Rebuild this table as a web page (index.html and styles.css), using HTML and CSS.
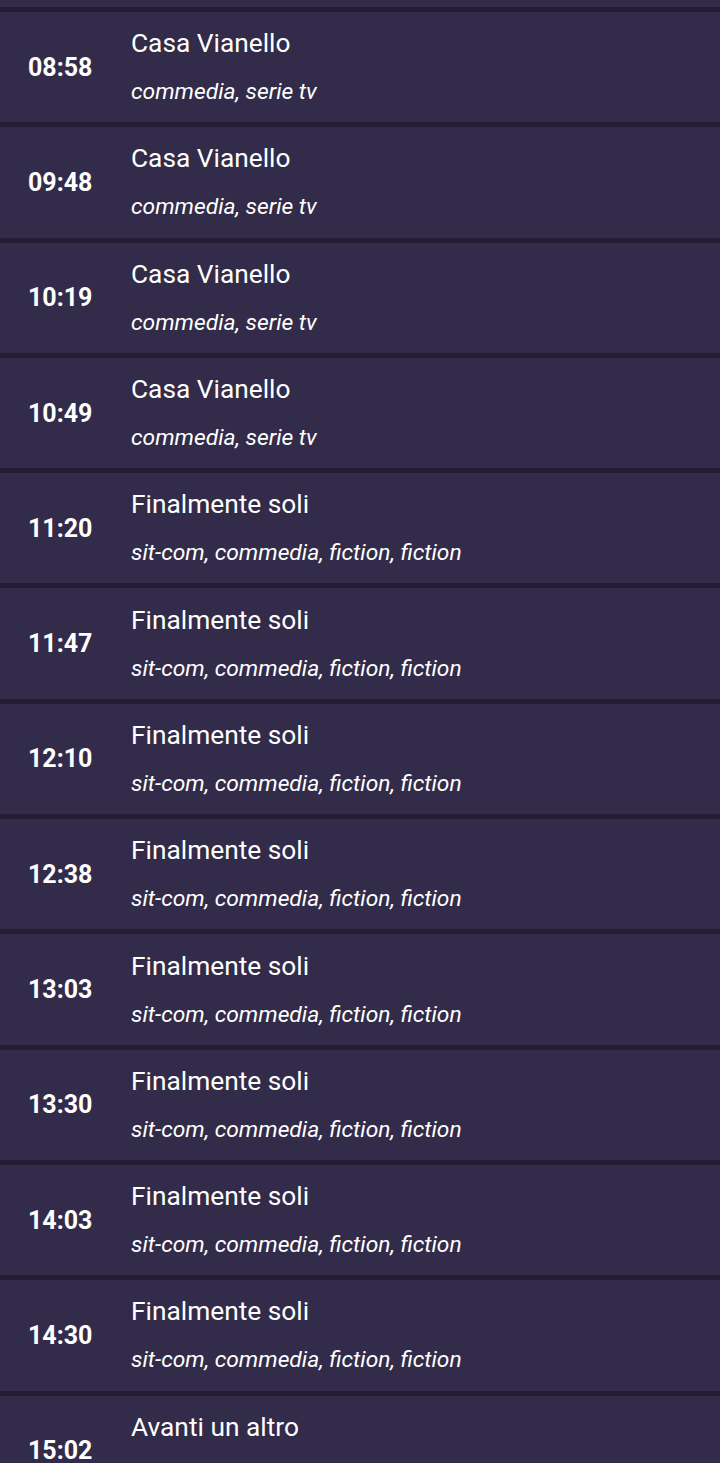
FILE: index.html
```html
<!DOCTYPE html>
<html lang="it">
<head>
<meta charset="utf-8">
<title>Guida TV</title>
<link rel="stylesheet" href="styles.css">
</head>
<body>
<ul class="schedule">
  <li class="item-partial"></li>
  <li class="item"><span class="time">08:58</span><div class="info"><div class="title">Casa Vianello</div><div class="genre">commedia, serie tv</div></div></li>
  <li class="item"><span class="time">09:48</span><div class="info"><div class="title">Casa Vianello</div><div class="genre">commedia, serie tv</div></div></li>
  <li class="item"><span class="time">10:19</span><div class="info"><div class="title">Casa Vianello</div><div class="genre">commedia, serie tv</div></div></li>
  <li class="item"><span class="time">10:49</span><div class="info"><div class="title">Casa Vianello</div><div class="genre">commedia, serie tv</div></div></li>
  <li class="item"><span class="time">11:20</span><div class="info"><div class="title">Finalmente soli</div><div class="genre">sit-com, commedia, fiction, fiction</div></div></li>
  <li class="item"><span class="time">11:47</span><div class="info"><div class="title">Finalmente soli</div><div class="genre">sit-com, commedia, fiction, fiction</div></div></li>
  <li class="item"><span class="time">12:10</span><div class="info"><div class="title">Finalmente soli</div><div class="genre">sit-com, commedia, fiction, fiction</div></div></li>
  <li class="item"><span class="time">12:38</span><div class="info"><div class="title">Finalmente soli</div><div class="genre">sit-com, commedia, fiction, fiction</div></div></li>
  <li class="item"><span class="time">13:03</span><div class="info"><div class="title">Finalmente soli</div><div class="genre">sit-com, commedia, fiction, fiction</div></div></li>
  <li class="item"><span class="time">13:30</span><div class="info"><div class="title">Finalmente soli</div><div class="genre">sit-com, commedia, fiction, fiction</div></div></li>
  <li class="item"><span class="time">14:03</span><div class="info"><div class="title">Finalmente soli</div><div class="genre">sit-com, commedia, fiction, fiction</div></div></li>
  <li class="item"><span class="time">14:30</span><div class="info"><div class="title">Finalmente soli</div><div class="genre">sit-com, commedia, fiction, fiction</div></div></li>
  <li class="item"><span class="time">15:02</span><div class="info"><div class="title">Avanti un altro</div><div class="genre">quiz, game show</div></div></li>
</ul>
</body>
</html>
```
FILE: styles.css
```css
html, body {
  margin: 0;
  padding: 0;
  background: #231e33;
  overflow: hidden;
  height: 1463px;
}
.schedule {
  list-style: none;
  margin: 0;
  padding: 0;
  display: flex;
  flex-direction: column;
  gap: 5px;
  font-family: Roboto, "Liberation Sans", sans-serif;
  color: #ffffff;
}
.item-partial {
  height: 7px;
  background: #322b49;
  flex: none;
}
.item {
  height: 110.3px;
  flex: none;
  box-sizing: border-box;
  background: #322b49;
  display: flex;
  align-items: center;
  padding-left: 28px;
}
.time {
  width: 103px;
  flex: none;
  font-size: 25px;
  font-weight: 700;
  line-height: 1;
}
.info {
  display: flex;
  flex-direction: column;
  gap: 20px;
}
.title {
  font-size: 26.3px;
  line-height: 30px;
}
.genre {
  font-size: 22.8px;
  font-style: italic;
  line-height: 28px;
}
```
